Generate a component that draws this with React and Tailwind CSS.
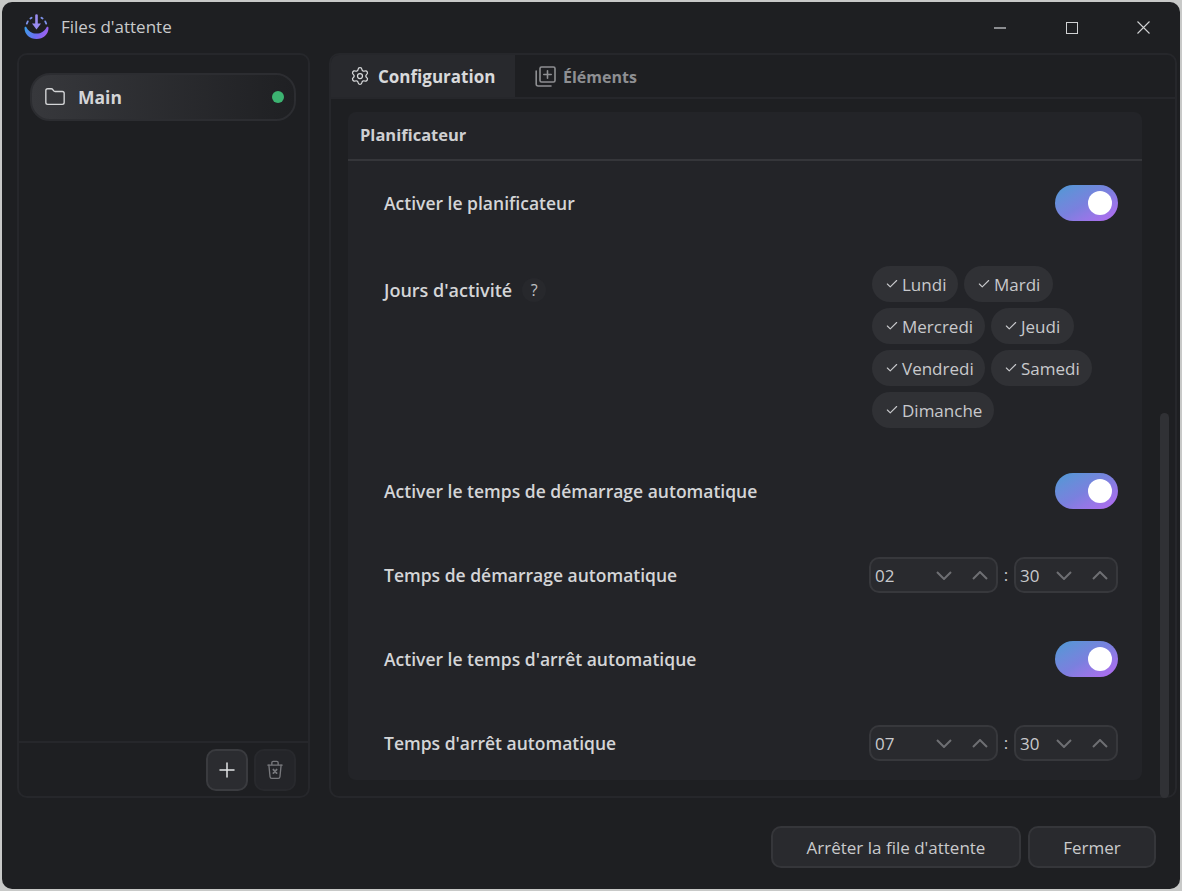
import React from 'react';
import { Check, Folder, Plus, Settings } from 'lucide-react';

const Logo = () => (
  <svg width="28" height="28" viewBox="0 0 28 28" fill="none">
    <defs>
      <linearGradient id="bowl" x1="1" y1="12" x2="26" y2="24" gradientUnits="userSpaceOnUse">
        <stop offset="0" stopColor="#35a4ea" />
        <stop offset="0.55" stopColor="#6f6cf0" />
        <stop offset="1" stopColor="#b45cf0" />
      </linearGradient>
    </defs>
    <path d="M1.5 14C1.5 20.5 6.8 25 13.5 25C20.2 25 25.5 20.5 25.5 14C25.5 13 24.4 12.5 23.6 13.2C22 16.8 18.2 19.6 13.5 19.6C8.8 19.6 5 16.8 3.4 13.2C2.6 12.5 1.5 13 1.5 14Z" fill="url(#bowl)" />
    <path d="M13.5 1.5V10" stroke="#9a8cf0" strokeWidth="2.6" strokeLinecap="round" />
    <path d="M9 9.4L13.5 15.4L18 9.4Z" fill="#9a8cf0" />
    <path d="M3.8 9.6L4.8 7.4M7.4 4.6L8.6 3.8M23.2 9.6L22.2 7.4M19.6 4.6L18.4 3.8" stroke="#7e92ea" strokeWidth="1.8" strokeLinecap="round" />
  </svg>
);

const Toggle = () => (
  <div className="w-[63px] h-9 rounded-full bg-gradient-to-br from-[#4a9ad4] via-[#7a80de] to-[#b468f2] flex items-center justify-end pr-[6px]">
    <div className="w-6 h-6 rounded-full bg-white" />
  </div>
);

const Chip = ({ label, width }) => (
  <div className={`${width} h-9 rounded-full bg-[#303135] flex items-center pl-[13px] gap-[3px] text-[#c8c9cc] text-[17px]`}>
    <Check size={14} strokeWidth={1.9} />
    <span className="pt-px">{label}</span>
  </div>
);

const Chevron = ({ up }) => (
  <svg width="16" height="9" viewBox="0 0 16 9" fill="none" stroke="currentColor" strokeWidth="2" className={up ? 'rotate-180' : ''}>
    <path d="M1 1L8 8L15 1" />
  </svg>
);

const Spin = ({ value, width }) => (
  <div className={`${width} h-9 rounded-[10px] border-2 border-[#37383c] bg-[#292a2e] flex items-center pl-1 text-[#c8c9cc] text-[17px]`}>
    <span className="pt-px">{value}</span>
    <div className="ml-auto flex items-center gap-5 pr-2 text-[#6e6f73]">
      <Chevron />
      <Chevron up />
    </div>
  </div>
);

const Time = ({ hour }) => (
  <div className="flex items-center">
    <Spin value={hour} width="w-[129px]" />
    <span className="w-[16px] text-center text-[#c8c9cc] text-[17px]">:</span>
    <Spin value="30" width="w-[104px]" />
  </div>
);

const Row = ({ label, children, last }) => (
  <div className={`flex items-center justify-between pl-9 pr-6 pt-6 ${last ? 'pb-[19px]' : 'pb-6'}`}>
    <span className="font-semibold text-[#d4d5d7] text-[17.5px] pt-px">{label}</span>
    {children}
  </div>
);

const App = () => {
  return (
    <div className="w-[1182px] h-[891px] bg-[#c8c9c8] pt-[2px] px-[2px] overflow-hidden font-['Open_Sans',sans-serif]">
      <div className="w-[1178px] h-[887px] rounded-[10px] bg-[#1e1f22] flex flex-col">
        <div className="h-[51px] flex items-center pl-[21px] shrink-0">
          <Logo />
          <span className="ml-[10px] mb-[2px] text-[#c9cacc] text-[17px]">Files d'attente</span>
          <div className="ml-auto flex items-center text-[#d0d1d3]">
            <div className="w-[72px] flex justify-center">
              <svg width="12" height="2" viewBox="0 0 12 2"><path d="M0 1H12" stroke="#a8a9ac" strokeWidth="1.6" /></svg>
            </div>
            <div className="w-[72px] flex justify-center">
              <svg width="12" height="12" viewBox="0 0 12 12" fill="none"><rect x="0.5" y="0.5" width="11" height="11" stroke="currentColor" /></svg>
            </div>
            <div className="w-[72px] flex justify-center pr-[2px]">
              <svg width="13" height="13" viewBox="0 0 13 13" fill="none"><path d="M0.5 0.5L12.5 12.5M12.5 0.5L0.5 12.5" stroke="currentColor" strokeWidth="1.1" /></svg>
            </div>
          </div>
        </div>

        <div className="h-[745px] flex shrink-0 pl-[15px]">
          <div className="w-[293px] rounded-[10px] border-2 border-[#26272b] flex flex-col">
            <div className="flex-1 pt-[18px] px-[11px]">
              <div className="h-12 w-[266px] rounded-[20px] border-2 border-[#2c2d31] bg-gradient-to-r from-[#37383c] to-[#1f2023] flex items-center pl-[12px] pr-[10px]">
                <Folder size={22} strokeWidth={1.5} className="text-[#d4d5d7]" />
                <span className="ml-[12px] font-bold text-[#d4d5d7] text-[17.5px]">Main</span>
                <div className="ml-auto w-3 h-3 rounded-full bg-[#3cb371]" />
              </div>
            </div>
            <div className="h-[55px] border-t-2 border-[#26272b] flex justify-end items-start gap-[6px] pt-[6px] pr-[12px]">
              <button className="w-[42px] h-[42px] rounded-[10px] border-2 border-[#3a3b3f] bg-[#2b2c30] flex items-center justify-center text-[#e4e5e6]">
                <Plus size={24} strokeWidth={1.5} />
              </button>
              <button className="w-[42px] h-[42px] rounded-[10px] border-2 border-[#28292d] bg-[#242529] flex items-center justify-center text-[#77787c]">
                <svg width="18" height="20" viewBox="0 0 20 22" fill="none" stroke="currentColor" strokeWidth="1.5" strokeLinecap="round" strokeLinejoin="round">
                  <path d="M2 5.5H18" />
                  <path d="M6.5 5V3C6.5 2 7.2 1.4 8 1.4H12C12.8 1.4 13.5 2 13.5 3V5" />
                  <path d="M3.2 5.5L4.5 18.5C4.6 19.6 5.4 20.3 6.4 20.3H13.6C14.6 20.3 15.4 19.6 15.5 18.5L16.8 5.5" />
                  <path d="M8.2 10.5L11.8 14.5M11.8 10.5L8.2 14.5" strokeWidth="2" />
                </svg>
              </button>
            </div>
          </div>

          <div className="ml-[19px] w-[848px] relative flex flex-col">
            <div className="h-[44px] flex shrink-0 rounded-t-[10px] border-t-2 border-x-2 border-[#26272b]">
              <div className="w-[184px] bg-[#28292d] rounded-tl-[8px] flex items-center pl-[19px] text-[#d8d9db]">
                <Settings size={20} strokeWidth={1.5} />
                <span className="ml-2 pt-px font-bold text-[17px]">Configuration</span>
              </div>
              <div className="flex items-center pl-[20px] text-[#8e8f92]">
                <svg width="21" height="21" viewBox="0 0 21 21" fill="none" stroke="currentColor" strokeWidth="1.6" strokeLinecap="round" strokeLinejoin="round">
                  <rect x="5" y="1" width="15" height="15" rx="1.5" />
                  <path d="M12.5 4.8V12.2M8.8 8.5H16.2" />
                  <path d="M1.2 5V18C1.2 19.2 2 20 3.2 20H16" />
                </svg>
                <span className="ml-[7px] pt-px font-bold text-[16px]">Éléments</span>
              </div>
            </div>
            <div className="flex-1 rounded-b-[10px] border-2 border-[#26272b] pt-[13px] pl-[17px]">
              <div className="w-[794px] h-[668px] rounded-[8px] bg-[#232428] overflow-hidden">
                <div className="h-[49px] flex items-center pl-3 border-b-2 border-[#35363a]">
                  <span className="font-bold text-[#cfd0d2] text-[16.5px]">Planificateur</span>
                </div>
                <Row label="Activer le planificateur"><Toggle /></Row>
                <div className="flex justify-between pl-9 pr-6 py-[21px]">
                  <div className="flex items-center h-[48px] gap-[10px]">
                    <span className="font-semibold text-[#d4d5d7] text-[18px] pt-px">Jours d'activité</span>
                    <span className="w-[24px] h-[24px] rounded-full bg-[#27282c] flex items-center justify-center text-[#c0c1c4] text-[16px]">?</span>
                  </div>
                  <div className="w-[246px] flex flex-wrap gap-x-[6px] gap-y-[6px] content-start">
                    <Chip label="Lundi" width="w-[86px]" />
                    <Chip label="Mardi" width="w-[89px]" />
                    <Chip label="Mercredi" width="w-[113px]" />
                    <Chip label="Jeudi" width="w-[83px]" />
                    <Chip label="Vendredi" width="w-[113px]" />
                    <Chip label="Samedi" width="w-[101px]" />
                    <Chip label="Dimanche" width="w-[122px]" />
                  </div>
                </div>
                <Row label="Activer le temps de démarrage automatique"><Toggle /></Row>
                <Row label="Temps de démarrage automatique"><Time hour="02" /></Row>
                <Row label="Activer le temps d'arrêt automatique"><Toggle /></Row>
                <Row label="Temps d'arrêt automatique" last><Time hour="07" /></Row>
              </div>
            </div>
            <div className="absolute left-[831px] top-[360px] w-[9px] h-[385px] rounded-full bg-[#303135]" />
          </div>
        </div>

        <div className="flex-1 flex justify-end items-start gap-[7px] pt-[28px] pr-[24px]">
          <button className="w-[250px] h-[42px] rounded-[10px] border-2 border-[#35363a] bg-[#292a2e] text-[#c9cacc] text-[17px] pt-px">Arrêter la file d'attente</button>
          <button className="w-[128px] h-[42px] rounded-[10px] border-2 border-[#35363a] bg-[#292a2e] text-[#c9cacc] text-[17px] pt-px">Fermer</button>
        </div>
      </div>
    </div>
  );
};

export default App;
